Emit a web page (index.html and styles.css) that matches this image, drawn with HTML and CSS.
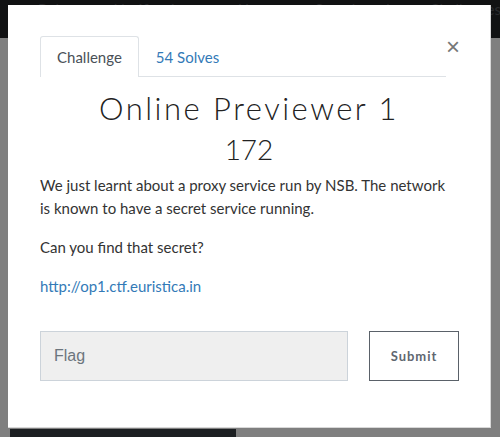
FILE: index.html
```html
<!DOCTYPE html>
<html>
<head>
<title>Online Previewer 1</title>
<link rel="stylesheet" href="styles.css">
</head>
<body>
<div class="navbar">
  <span>Rules</span>
  <span>Notifications</span>
  <span>Users</span>
  <span>Scoreboard</span>
  <span>Challenges</span>
</div>
<div class="page">
  <div class="page-block"></div>
</div>

<div class="modal">
  <div class="modal-head">
    <ul class="tabs">
      <li class="tab active">Challenge</li>
      <li class="tab">54 Solves</li>
    </ul>
    <span class="close">&times;</span>
  </div>

  <h2 class="title">Online Previewer 1</h2>
  <div class="points">172</div>

  <div class="desc">
    <p>We just learnt about a proxy service run by NSB. The network is known to have a secret service running.</p>
    <p>Can you find that secret?</p>
    <p><a href="#">http://op1.ctf.euristica.in</a></p>
  </div>

  <form class="flag-form">
    <input type="text" class="flag" placeholder="Flag">
    <button type="button" class="submit">Submit</button>
  </form>
</div>
</body>
</html>
```

FILE: styles.css
```css
body {
  margin: 0;
  background-color: #7f7f7f;
  font-family: Lato, "Liberation Sans", sans-serif;
  height: 437px;
  overflow: hidden;
}

.navbar {
  height: 38px;
  background-color: #111213;
  display: flex;
  gap: 40px;
  padding-left: 38px;
  font-size: 15px;
  color: #2a2b2d;
  line-height: 18px;
}

.page {
  display: flex;
  padding-left: 10px;
  padding-top: 391px;
}

.page-block {
  width: 226px;
  height: 8px;
  background-color: #1c1f22;
}

.modal {
  position: absolute;
  left: 8px;
  top: 5px;
  width: 483px;
  height: 423px;
  box-sizing: border-box;
  background-color: #fff;
  border-right: 1px solid #d8d8d8;
  border-bottom: 1px solid #d8d8d8;
  padding: 31px 32px 0 32px;
  color: #212529;
}

.modal-head {
  display: flex;
  align-items: flex-start;
}

.tabs {
  list-style: none;
  margin: 0;
  padding: 0;
  display: flex;
  width: 407px;
  border-bottom: 1px solid #dee2e6;
}

.tab {
  padding: 10px 16px 9px 16px;
  font-size: 15px;
  line-height: 20px;
  color: #337ab7;
  border: 1px solid transparent;
  border-bottom: none;
  margin-bottom: -1px;
}

.tab.active {
  color: #495057;
  background-color: #fff;
  border-color: #dee2e6;
  border-radius: 3px 3px 0 0;
  padding-bottom: 10px;
}

.close {
  margin-left: auto;
  font-family: "Liberation Sans", sans-serif;
  font-size: 24px;
  line-height: 22px;
  color: #777;
  margin-right: -2px;
}

.title {
  margin: 12px 0 0 0;
  text-align: center;
  font-family: Lato, sans-serif;
  font-weight: 300;
  font-size: 31px;
  letter-spacing: 2.5px;
  line-height: 38px;
  color: #222;
}

.points {
  text-align: center;
  font-weight: 300;
  font-size: 28px;
  line-height: 34px;
  margin-top: 5px;
  color: #222;
}

.desc {
  margin-top: 8px;
  font-size: 15px;
  line-height: 23px;
  color: #333;
}

.desc p {
  margin: 0 0 16px 0;
}

.desc a {
  color: #337ab7;
  text-decoration: none;
}

.flag-form {
  display: flex;
  justify-content: space-between;
  margin-top: 33px;
  margin-right: -1px;
}

.flag {
  width: 308px;
  height: 50px;
  box-sizing: border-box;
  background-color: #efefef;
  border: 1px solid #ccd3da;
  padding: 0 13px;
  font-family: "Liberation Sans", sans-serif;
  font-size: 16px;
  color: #555;
}

.flag::placeholder {
  color: #6c757d;
}

.submit {
  width: 90px;
  height: 50px;
  background-color: #fff;
  border: 1px solid #5a6169;
  font-family: Lato, sans-serif;
  font-weight: bold;
  font-size: 13px;
  letter-spacing: 1px;
  color: #5f6770;
}
```
